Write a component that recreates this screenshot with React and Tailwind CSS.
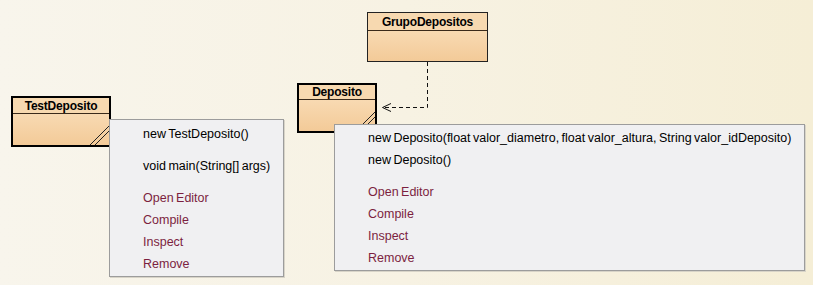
import React from "react";

function ClassBox({ name, left, top, width, height, thick, headerH }) {
  return (
    <div
      className={`absolute flex flex-col ${thick ? "border-2 border-black" : "border border-[#222]"}`}
      style={{ left, top, width, height }}
    >
      <div
        className="flex items-center justify-center border-b border-[#3a2a1a] bg-[#f7d9b0] text-[12px] font-bold leading-none text-black tracking-[-0.2px]"
        style={{ height: headerH }}
      >
        {name}
      </div>
      <div className="relative flex-1 bg-gradient-to-b from-[#f8dab2] to-[#f3ca98]">
        {thick && (
          <svg className="absolute bottom-0 right-0" width="20" height="20" viewBox="0 0 20 20">
            <line x1="1" y1="20" x2="20" y2="1" stroke="#222" strokeWidth="1" />
            <line x1="6" y1="20" x2="20" y2="6" stroke="#222" strokeWidth="1" />
          </svg>
        )}
      </div>
    </div>
  );
}

function Item({ children, action }) {
  return (
    <div
      className={`flex h-[22px] items-center pl-[33px] pr-[12px] whitespace-nowrap text-[12.5px] [word-spacing:-1px] ${action ? "text-[#7c1f3f]" : "text-black"}`}
    >
      {children}
    </div>
  );
}

function Sep() {
  return <div className="h-[10px]" />;
}

export default function App() {
  return (
    <div className="relative h-[285px] w-[813px] overflow-hidden bg-gradient-to-r from-[#f8f5ec] via-[#f7f2e3] to-[#f5eed6] font-['Liberation_Sans',Arial,sans-serif] text-[12px]">
      <ClassBox name="GrupoDepositos" left={367} top={12} width={121} height={50} headerH={18} />
      <ClassBox name="TestDeposito" left={11} top={96} width={100} height={51} thick headerH={16} />
      <ClassBox name="Deposito" left={297} top={83} width={80} height={50} thick headerH={15} />

      <svg className="pointer-events-none absolute left-0 top-0" width="813" height="285">
        <path d="M427.5 62 V107.5 H383" fill="none" stroke="#111" strokeWidth="1" strokeDasharray="4 3" />
        <polyline points="391,103.5 382.5,107.5 391,111.5" fill="none" stroke="#111" strokeWidth="1" />
      </svg>

      <div className="absolute left-[109px] top-[119px] flex w-[175px] flex-col border border-[#9c9c9c] bg-[#f0f0f2] pt-[3px] pb-[1px] shadow-[1px_1px_0_#d8d4c8]">
        <Item>new TestDeposito()</Item>
        <Sep />
        <Item>void main(String[] args)</Item>
        <Sep />
        <Item action>Open Editor</Item>
        <Item action>Compile</Item>
        <Item action>Inspect</Item>
        <Item action>Remove</Item>
      </div>

      <div className="absolute left-[334px] top-[124px] flex w-[471px] flex-col border border-[#9c9c9c] bg-[#f0f0f2] pt-[2px] pb-[1px] shadow-[1px_1px_0_#d8d4c8]">
        <Item>new Deposito(float valor_diametro, float valor_altura, String valor_idDeposito)</Item>
        <Item>new Deposito()</Item>
        <Sep />
        <Item action>Open Editor</Item>
        <Item action>Compile</Item>
        <Item action>Inspect</Item>
        <Item action>Remove</Item>
      </div>
    </div>
  );
}
